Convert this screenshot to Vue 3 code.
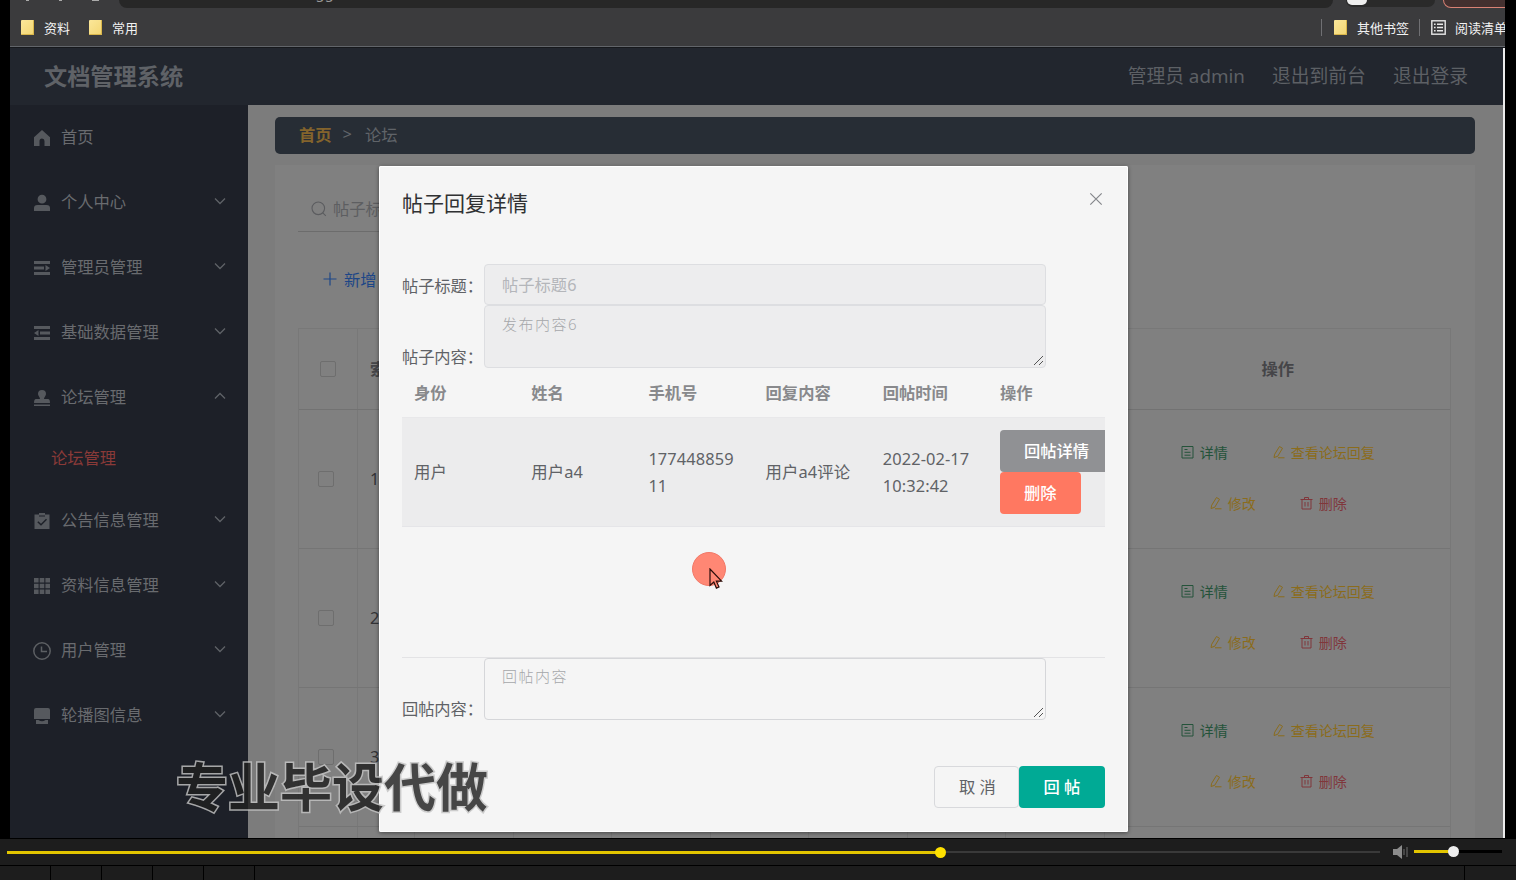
<template>
  <div class="player">
    <div class="screen">
      <!-- 浏览器顶部 -->
      <div class="browser">
        <div class="address-row">
          <div class="nav-tips"><i></i><i></i><i class="wide"></i></div>
          <div class="address"><span class="url">ⓘ localhost:8080/wendangguanli/admin/dist/index.html#/forum</span></div>
          <div class="profile"><span class="avatar"></span></div>
          <div class="update"></div>
        </div>
        <div class="bookmarks">
          <div class="bookmark"><span class="folder"></span>资料</div>
          <div class="bookmark"><span class="folder"></span>常用</div>
          <div class="bookmark-right">
            <span class="split"></span>
            <div class="bookmark"><span class="folder"></span>其他书签</div>
            <span class="split second"></span>
            <div class="bookmark reading">
              <svg width="15" height="15" viewBox="0 0 15 15" fill="none" stroke="#e8e8e8" stroke-width="1.4">
                <rect x=".8" y=".8" width="13.4" height="13.4" />
                <path d="M3 4.3h1.6M6 4.3h6M3 7.5h1.6M6 7.5h6M3 10.7h1.6M6 10.7h6" />
              </svg>
              阅读清单
            </div>
          </div>
        </div>
      </div>

      <div class="app">
        <header class="header">
          <h1>文档管理系统</h1>
          <div class="user-links">
            <span>管理员 admin</span>
            <span>退出到前台</span>
            <span>退出登录</span>
          </div>
        </header>

        <div class="body">
          <aside class="sidebar">
            <template v-for="item in menus" :key="item.title">
              <div class="menu-item">
                <svg class="menu-icon" width="18" height="18" viewBox="0 0 18 18">
                  <path :d="item.icon" :class="{ line: item.line }" fill-rule="evenodd" />
                </svg>
                <span>{{ item.title }}</span>
                <svg v-if="item.arrow" class="arrow" width="12" height="8" viewBox="0 0 12 8">
                  <path :d="item.arrow === 'up' ? 'M1 6.5l5-5 5 5' : 'M1 1.5l5 5 5-5'" />
                </svg>
              </div>
              <div v-if="item.children" class="sub-item">{{ item.children }}</div>
            </template>
          </aside>

          <main class="main">
            <div class="breadcrumb">
              <b>首页</b><span class="gt">&gt;</span><span>论坛</span>
            </div>
            <div class="card">
              <div class="search">
                <svg width="16" height="16" viewBox="0 0 16 16" fill="none" stroke="#5b5c5f" stroke-width="1.1">
                  <circle cx="7.3" cy="7.3" r="6.3" /><path d="M11.8 11.8l3 3" />
                </svg>
                <span>帖子标题</span>
              </div>
              <div class="add">
                <svg width="14" height="14" viewBox="0 0 14 14"><path d="M7 .5v13M.5 7h13" stroke="#1d4687" stroke-width="1.2" /></svg>
                <span>新增</span>
              </div>
              <div class="grid">
                <div class="row head">
                  <div class="cell check"><i class="checkbox"></i></div>
                  <div class="cell index">索引</div>
                  <div v-for="n in 7" :key="n" class="cell mid"></div>
                  <div class="cell ops">操作</div>
                </div>
                <div v-for="n in 3" :key="n" class="row">
                  <div class="cell check"><i class="checkbox"></i></div>
                  <div class="cell index">{{ n }}</div>
                  <div v-for="m in 7" :key="m" class="cell mid"></div>
                  <div class="cell ops">
                    <div v-for="(line, i) in actions" :key="i" class="ops-line">
                      <span v-for="a in line" :key="a.text" class="op" :class="a.type">
                        <svg width="13" height="14" viewBox="0 0 13 14"><path :d="icons[a.icon]" /></svg>
                        {{ a.text }}
                      </span>
                    </div>
                  </div>
                </div>
                <div class="row">
                  <div class="cell check"></div>
                  <div class="cell index"></div>
                  <div v-for="m in 7" :key="m" class="cell mid"></div>
                </div>
              </div>
            </div>
          </main>
        </div>
      </div>

      <!-- 帖子回复弹窗 -->
      <div class="dialog">
        <div class="dialog-header">
          <span class="title">帖子回复详情</span>
          <svg class="close" width="14" height="14" viewBox="0 0 14 14"><path d="M1.3 1.3l11.4 11.4M12.7 1.3L1.3 12.7" /></svg>
        </div>
        <div class="dialog-body">
          <div class="field">
            <label>帖子标题：</label>
            <div class="input disabled">帖子标题6</div>
          </div>
          <div class="field">
            <label>帖子内容：</label>
            <div class="textarea disabled">发布内容6
              <svg class="resize" width="11" height="11" viewBox="0 0 11 11"><path d="M1 10L10 1M6 10l4-4" /></svg>
            </div>
          </div>
          <div class="reply-table">
            <div class="reply-row reply-head">
              <div v-for="h in heads" :key="h">{{ h }}</div>
            </div>
            <div class="reply-row reply-data">
              <div v-for="v in reply" :key="v">{{ v }}</div>
              <div class="btns">
                <button class="btn info">回帖详情</button>
                <button class="btn danger">删除</button>
              </div>
            </div>
          </div>
          <div class="field">
            <label>回帖内容：</label>
            <div class="textarea new-reply">回帖内容
              <svg class="resize" width="11" height="11" viewBox="0 0 11 11"><path d="M1 10L10 1M6 10l4-4" /></svg>
            </div>
          </div>
        </div>
        <div class="dialog-footer">
          <button class="btn cancel">取 消</button>
          <button class="btn primary">回 帖</button>
        </div>
      </div>

      <div class="pointer">
        <svg width="14" height="21" viewBox="0 0 14 21"><path d="M1 1v16.5l3.8-3.4 2.6 6 2.6-1.1-2.6-5.8h5.2z" /></svg>
      </div>
      <div class="watermark">专业毕设代做</div>
    </div>

    <!-- 播放控制条 -->
    <div class="controls">
      <div class="track">
        <div class="played" :style="{ width: progress + '%' }"><i class="dot"></i></div>
      </div>
      <svg class="speaker" width="16" height="14" viewBox="0 0 16 14">
        <path d="M0 4h4l5-4v14l-5-4H0z" fill="#8c8c8c" />
        <path d="M11 4v6M14 2v10" stroke="#707070" />
      </svg>
      <div class="volume">
        <div class="level" :style="{ width: volume + '%' }"><i class="dot"></i></div>
      </div>
    </div>
    <div class="strip">
      <i v-for="n in 5" :key="n"></i>
      <i class="last"></i>
    </div>
  </div>
</template>

<script setup>
import { ref } from 'vue'

const progress = ref(68)
const volume = ref(45)

// 左侧菜单
const menus = [
  { title: '首页', icon: 'M9 1L1 8.3V17h5.5v-5a2.5 2.5 0 0 1 5 0v5H17V8.3z' },
  { title: '个人中心', arrow: 'down', icon: 'M9 .8a4.4 4.4 0 1 1 0 8.8a4.4 4.4 0 0 1 0-8.8zM1 17v-3q0-3 3.5-3h9q3.500 0 3.500 3v3z' },
  { title: '管理员管理', arrow: 'down', icon: 'M1 2h16v3H1zM1 7.500h10v3H1zM12.500 6l4.500 3-4.500 3zM1 13h16v3H1z' },
  { title: '基础数据管理', arrow: 'down', icon: 'M1 2h16v3H1zM7 7.500h10v3H7zM5.500 6L1 9l4.500 3zM1 13h16v3H1z' },
  { title: '论坛管理', arrow: 'up', children: '论坛管理', icon: 'M9 1a4 4 0 0 1 4 4c0 2-2 3-2 5h4q2 0 2 4H1q0-4 2-4h4c0-2-2-3-2-5a4 4 0 0 1 4-4zM1 15.500h16V17H1z' },
  { title: '公告信息管理', arrow: 'down', icon: 'M1.500 2.500H6V1h6v1.500h4.500V17h-15zM6 3.500v1h6v-1zM5.300 9.200l-1 1L8 13.800l6-6-1-1-5 5z' },
  { title: '资料信息管理', arrow: 'down', icon: 'M1 1h4.600v4.600H1zM6.700 1h4.600v4.600H6.700zM12.400 1H17v4.600h-4.600zM1 6.700h4.600v4.600H1zM6.700 6.700h4.600v4.600H6.700zM12.400 6.700H17v4.600h-4.600zM1 12.400h4.600V17H1zM6.700 12.400h4.600V17H6.700zM12.400 12.400H17V17h-4.600z' },
  { title: '用户管理', arrow: 'down', line: true, icon: 'M9 .8a8.200 8.200 0 1 1 0 16.400a8.200 8.200 0 0 1 0-16.400zM8.500 4.500V9.500H14' },
  { title: '轮播图信息', arrow: 'down', icon: 'M3 1h12q2 0 2 2v9H1V3q0-2 2-2zM3 13h2.500q3.500 2.500 7 0H15v4H3z' }
]

const icons = {
  doc: 'M1 1.500h11v11.500H1zM3.500 4.500h3M3.500 7.300h6M3.500 10.200h6',
  edit: 'M7.500 1.500l3 1.800-4.800 8L2 12.500 2.700 9.200zM6 12.800h6.500',
  trash: 'M.5 3.500h12M4.500 3.500v-2h4v2M2 3.500v9.500h9V3.500M5 6v4.500M8 6v4.500'
}

const actions = [
  [
    { text: '详情', icon: 'doc', type: 'green' },
    { text: '查看论坛回复', icon: 'edit', type: 'yellow' }
  ],
  [
    { text: '修改', icon: 'edit', type: 'yellow' },
    { text: '删除', icon: 'trash', type: 'red' }
  ]
]

const heads = ['身份', '姓名', '手机号', '回复内容', '回帖时间', '操作']
const reply = ['用户', '用户a4', '17744885911', '用户a4评论', '2022-02-17 10:32:42']
</script>

<style>
body {
  background: #000;
  overflow: hidden;
}
</style>

<style scoped>
* {
  box-sizing: border-box;
}

.player {
  width: 1516px;
  height: 880px;
  display: flex;
  flex-direction: column;
  overflow: hidden;
  background: #000;
  font-family: 'Noto Sans', 'Noto Sans CJK SC', sans-serif;
  font-size: 16.3px;
}

.screen {
  position: relative;
  width: 1495px;
  height: 838px;
  margin-left: 10px;
  overflow: hidden;
  display: flex;
  flex-direction: column;
}

/* 浏览器 */
.browser {
  height: 48px;
  flex: none;
  background: #3b3b3d;
  border-bottom: 1px solid #17191d;
  box-shadow: inset 0 -1px #62656a;
  overflow: hidden;
}

.address-row {
  height: 8px;
  display: flex;
  overflow: hidden;
}

.nav-tips {
  width: 109px;
  flex: none;
  display: flex;
  gap: 30px;
  padding-left: 16px;
}

.nav-tips i {
  width: 3px;
  height: 1px;
  background: #aaa;
}

.nav-tips .wide {
  width: 7px;
}

.address {
  width: 1214px;
  height: 8px;
  flex: none;
  border-radius: 0 0 14px 14px;
  background: #272727;
  display: flex;
  align-items: flex-end;
  overflow: hidden;
  padding-left: 13px;
}

.url {
  color: #999;
  font-size: 14.5px;
  line-height: 20px;
  height: 20px;
  margin-bottom: 6px;
  letter-spacing: 0.3px;
  white-space: nowrap;
}

.profile {
  width: 89px;
  height: 7px;
  flex: none;
  margin-left: 13px;
  border-radius: 0 0 12px 12px;
  background: #2a2a2a;
}

.avatar {
  display: block;
  width: 20px;
  height: 5px;
  margin-left: 1px;
  border-radius: 0 0 10px 10px;
  background: #eee;
}

.update {
  width: 90px;
  height: 8px;
  margin-left: 8px;
  flex: none;
  border: 1px solid #d98275;
  border-top: 0;
  border-radius: 0 0 14px 14px;
  background: #43302f;
}

.bookmarks {
  height: 38px;
  display: flex;
  align-items: center;
  padding-left: 11px;
  color: #f2f2f2;
  font-size: 13px;
}

.bookmark {
  display: flex;
  align-items: center;
  white-space: nowrap;
  margin-right: 19px;
}

.folder {
  width: 13px;
  height: 15px;
  margin-right: 10px;
  background: linear-gradient(135deg, #fbe79a, #f3d672);
  border-radius: 1px;
  box-shadow: inset -1px -1px #d9b64b;
}

.bookmark-right {
  display: flex;
  align-items: center;
  margin-left: auto;
  width: 184px;
  flex: none;
  overflow: hidden;
}

.bookmark-right .bookmark {
  margin-right: 10px;
}

.bookmark-right .reading {
  margin-right: 0;
  gap: 9px;
}

.split {
  width: 1px;
  height: 17px;
  flex: none;
  background: #707073;
  margin-right: 12px;
}

.split.second {
  margin-right: 11px;
}

/* 后台页面 */
.app {
  flex: 1;
  min-height: 0;
  display: flex;
  flex-direction: column;
  border-right: 2px solid #ececec;
}

.header {
  height: 57px;
  flex: none;
  display: flex;
  align-items: center;
  justify-content: space-between;
  padding: 0 35px 3px 34px;
  background: #22262e;
}

.header h1 {
  margin: 0;
  font-size: 23.2px;
  font-weight: 700;
  color: #5f6267;
}

.user-links {
  display: flex;
  gap: 27px;
  font-size: 18.8px;
  color: #5d6065;
}

.body {
  flex: 1;
  min-height: 0;
  display: flex;
}

.sidebar {
  width: 238px;
  flex: none;
  background: #1d2028;
  color: #696b6f;
  overflow: hidden;
}

.menu-item {
  height: 65px;
  display: flex;
  align-items: center;
  padding: 0 22px 0 23px;
}

.menu-item span {
  padding-bottom: 3px;
}

.menu-icon {
  margin-right: 10px;
  fill: #56595e;
}

.menu-icon .line {
  fill: none;
  stroke: #5c5f63;
  stroke-width: 1.5;
}

.arrow {
  margin-left: auto;
  margin-bottom: 4px;
  fill: none;
  stroke: #5f6267;
  stroke-width: 1.3;
}

.sub-item {
  height: 58px;
  line-height: 57px;
  padding-left: 41px;
  color: #8a3a38;
}

.main {
  flex: 1;
  min-width: 0;
  padding: 12px 28px 0 27px;
  background: #7c7c7c;
  overflow: hidden;
}

.breadcrumb {
  height: 37px;
  display: flex;
  align-items: center;
  padding: 0 0 3px 24px;
  border-radius: 5px;
  background: #272d35;
  color: #606469;
}

.breadcrumb b {
  color: #84642c;
}

.gt {
  margin: 0 13px 0 11px;
}

.card {
  height: 700px;
  margin-top: 11px;
  padding: 22px 24px 0 23px;
  background: #808080;
}

.search {
  height: 45px;
  width: 200px;
  display: flex;
  align-items: center;
  gap: 6px;
  padding-left: 13px;
  border-bottom: 1px solid #6c6c6c;
  color: #5d5e61;
}

.search span {
  padding-bottom: 2px;
}

.add {
  height: 96px;
  display: flex;
  align-items: center;
  gap: 7px;
  padding: 0 0 2px 25px;
  color: #1d4687;
}

.add span {
  padding-bottom: 1px;
}

.grid {
  border: 1px solid #787878;
  border-bottom: 0;
}

.row {
  height: 139px;
  display: flex;
  border-bottom: 1px solid #757575;
}

.row.head {
  height: 81px;
  border-bottom-color: #727272;
  font-weight: 700;
  color: #414144;
}

.cell {
  display: flex;
  align-items: center;
  justify-content: center;
  flex: none;
  border-right: 1px solid #787878;
  color: #333336;
}

.head .cell {
  padding-bottom: 2px;
  color: #454548;
}

.check {
  width: 59px;
  padding-right: 4px;
}

.head .check {
  padding: 0;
}

.checkbox {
  width: 16px;
  height: 16px;
  border: 1px solid #6e6e6e;
  border-radius: 2px;
}

.index {
  width: 57px;
  justify-content: flex-start;
  padding-left: 12px;
}

.mid {
  width: 98.5px;
}

.ops {
  flex: 1;
  flex-direction: column;
  gap: 23px;
  border-right: 0;
  padding: 0 0 4px 1px;
}

.ops-line {
  display: flex;
  gap: 44px;
  height: 28px;
  align-items: center;
}

.op {
  display: flex;
  align-items: center;
  gap: 6px;
  font-size: 14px;
  white-space: nowrap;
}

.op svg {
  fill: none;
  stroke: currentColor;
}

.green {
  color: #24533a;
}

.yellow {
  color: #8b6c1b;
}

.red {
  color: #80363b;
}

/* 弹窗 */
.dialog {
  position: absolute;
  left: 369px;
  top: 166px;
  width: 749px;
  height: 666px;
  padding: 0 23px;
  border-radius: 2px;
  background: #f5f5f5;
  box-shadow: 0 1px 4px rgba(0, 0, 0, 0.45), inset 0 0 0 1px #fff;
  color: #606266;
}

.dialog-header {
  height: 98px;
  display: flex;
  align-items: flex-start;
  justify-content: space-between;
  padding-top: 21px;
}

.title {
  font-size: 21px;
  line-height: 32px;
  color: #303133;
}

.close {
  margin: 5px 2px 0 0;
  stroke: #85878b;
  stroke-width: 1.2;
}

.field {
  display: flex;
  align-items: flex-end;
}

.field label {
  width: 82px;
  flex: none;
  line-height: 20px;
  padding-bottom: 1px;
  letter-spacing: -0.1px;
  white-space: nowrap;
}

.field:first-child label {
  padding-bottom: 9px;
}

.input,
.textarea {
  width: 562px;
  border: 1px solid #d5d6d9;
  border-radius: 4px;
  color: #b4b6ba;
  padding: 0 17px;
}

.input {
  height: 41px;
  line-height: 41px;
}

.textarea {
  position: relative;
  height: 63px;
  padding-top: 6px;
  line-height: 25px;
  font-size: 15px;
  font-weight: 300;
  letter-spacing: 1.5px;
  color: #a5a7aa;
}

.new-reply {
  height: 62px;
  padding-top: 5px;
}

.disabled {
  background: #ededee;
  border-color: #dddee1;
}

.resize {
  position: absolute;
  right: 1px;
  bottom: 1px;
  stroke: #555;
}

.reply-table {
  height: 290px;
  overflow: hidden;
  border-bottom: 1px solid #e3e3e5;
}

.reply-row {
  display: flex;
  align-items: center;
}

.reply-row > div {
  width: 117.2px;
  flex: none;
  padding: 0 13px 0 12px;
  word-break: break-all;
}

.reply-head {
  height: 50px;
  padding-bottom: 1px;
  border-bottom: 1px solid #e8e8ea;
  font-weight: 700;
  color: #88898c;
}

.reply-data {
  height: 109px;
  line-height: 27.5px;
  font-size: 16.4px;
  letter-spacing: 0.1px;
  background: #ececed;
  border-bottom: 1px solid #e5e5e8;
}

.reply-row > .btns {
  display: flex;
  flex-direction: column;
  align-items: flex-start;
  padding-right: 0;
}

.btn {
  height: 42px;
  flex: none;
  padding: 0 24px 2px;
  border: 0;
  border-radius: 4px;
  font-family: inherit;
  font-size: 16.3px;
  font-weight: 500;
  white-space: nowrap;
  color: #fff;
}

.info {
  background: #909194;
}

.danger {
  background: #ff7861;
}

.dialog-footer {
  display: flex;
  justify-content: flex-end;
  padding-top: 46px;
}

.cancel {
  width: 85px;
  background: #f5f5f5;
  border: 1px solid #d8d9dc;
  font-weight: 400;
  color: #606266;
}

.primary {
  width: 86px;
  background: #00aa95;
}

.pointer {
  position: absolute;
  left: 682px;
  top: 552px;
  width: 34px;
  height: 34px;
  border-radius: 50%;
  border: 1px solid #f27867;
  background: #ff8774;
}

.pointer svg {
  position: absolute;
  left: 16px;
  top: 15px;
  fill: #ff8774;
  stroke: #2a0d0a;
  stroke-width: 1.2;
}

.watermark {
  position: absolute;
  left: 166px;
  top: 747px;
  font-family: 'Noto Sans CJK SC', sans-serif;
  font-size: 52px;
  line-height: 76px;
  font-weight: 700;
  color: #202020;
  opacity: 0.82;
  -webkit-text-stroke: 3px #c4c4c4;
  paint-order: stroke fill;
  white-space: nowrap;
}

/* 播放器 */
.controls {
  height: 28px;
  flex: none;
  display: flex;
  align-items: center;
  padding: 0 14px 1px 7px;
  background: #1d1d1d;
  border-top: 1px solid #000;
  border-bottom: 1px solid #000;
}

.track {
  width: 1373px;
  height: 2px;
  background: #3a3a3a;
}

.played,
.level {
  position: relative;
  height: 3px;
  background: #e2c500;
}

.dot {
  position: absolute;
  right: -5px;
  top: -4px;
  width: 11px;
  height: 11px;
  border-radius: 50%;
  background: #ffe100;
}

.speaker {
  margin: 0 5px 0 13px;
}

.volume {
  width: 88px;
  height: 3px;
  background: #000;
}

.volume .dot {
  background: #eee;
}

.strip {
  flex: 1;
  display: flex;
  background: #1d1d1d;
}

.strip i {
  width: 51px;
  border-right: 1px solid #000;
}

.strip .last {
  width: 1210px;
}
</style>
